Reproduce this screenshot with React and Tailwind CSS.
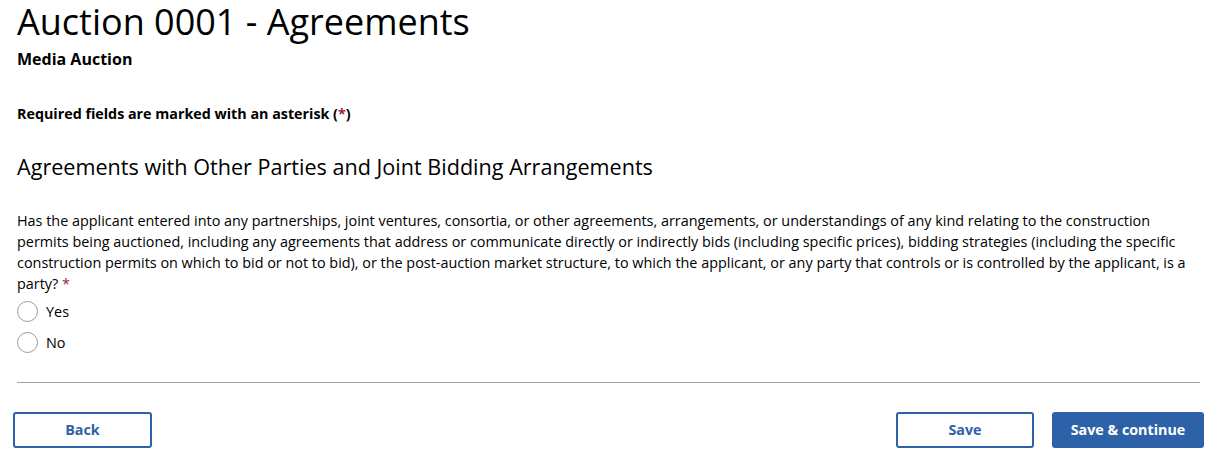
import React, { useState } from 'react';

const RadioOption = ({ label, checked, onChange }) => (
  <label className="flex items-center gap-[8px] h-[31px] cursor-pointer">
    <span className="w-[21px] h-[21px] rounded-full border border-[#9a9a9a] bg-white flex items-center justify-center">
      {checked && <span className="w-[11px] h-[11px] rounded-full bg-[#2e62a8]" />}
    </span>
    <input type="radio" className="hidden" checked={checked} onChange={onChange} />
    <span className="text-[14.4px] text-black">{label}</span>
  </label>
);

const App = () => {
  const [answer, setAnswer] = useState(null);

  return (
    <div className="bg-white w-full min-h-[473px] font-['Open_Sans',sans-serif] text-black">
      <div className="px-[17px]">
        <h1 className="text-[36px] leading-[48px] -mt-[2px] font-normal">Auction 0001 - Agreements</h1>
        <p className="text-[16px] font-bold leading-[22px] mt-[2px]">Media Auction</p>

        <p className="text-[14.3px] font-bold leading-[20px] mt-[34px]">
          Required fields are marked with an asterisk (<span className="text-[#a3182c]">*</span>)
        </p>

        <h2 className="text-[21.6px] leading-[30px] font-normal mt-[28px]">
          Agreements with Other Parties and Joint Bidding Arrangements
        </h2>

        <p className="text-[14.4px] leading-[21px] mt-[28px] pr-[10px]">
          Has the applicant entered into any partnerships, joint ventures, consortia, or other agreements, arrangements, or understandings of any kind relating to the construction permits being auctioned, including any agreements that address or communicate directly or indirectly bids (including specific prices), bidding strategies (including the specific construction permits on which to bid or not to bid), or the post-auction market structure, to which the applicant, or any party that controls or is controlled by the applicant, is a party? <span className="text-[#a3182c]">*</span>
        </p>

        <div className="mt-[2px] flex flex-col">
          <RadioOption label="Yes" checked={answer === 'yes'} onChange={() => setAnswer('yes')} />
          <RadioOption label="No" checked={answer === 'no'} onChange={() => setAnswer('no')} />
        </div>

        <hr className="border-0 border-t border-[#a0a0a0] mt-[24px] mr-[4px]" />
      </div>

      <div className="flex items-center justify-between pl-[13px] pr-[17px] mt-[29px]">
        <button className="w-[139px] h-[36px] rounded-[3px] border-2 border-[#2e62a8] text-[#2e62a8] text-[14.3px] font-bold bg-white">
          Back
        </button>
        <div className="flex gap-[18px]">
          <button className="w-[138px] h-[36px] rounded-[3px] border-2 border-[#2e62a8] text-[#2e62a8] text-[14.3px] font-bold bg-white">
            Save
          </button>
          <button className="w-[152px] h-[36px] rounded-[3px] bg-[#2e62a8] text-white text-[14.3px] font-bold">
            Save &amp; continue
          </button>
        </div>
      </div>
    </div>
  );
};

export default App;
